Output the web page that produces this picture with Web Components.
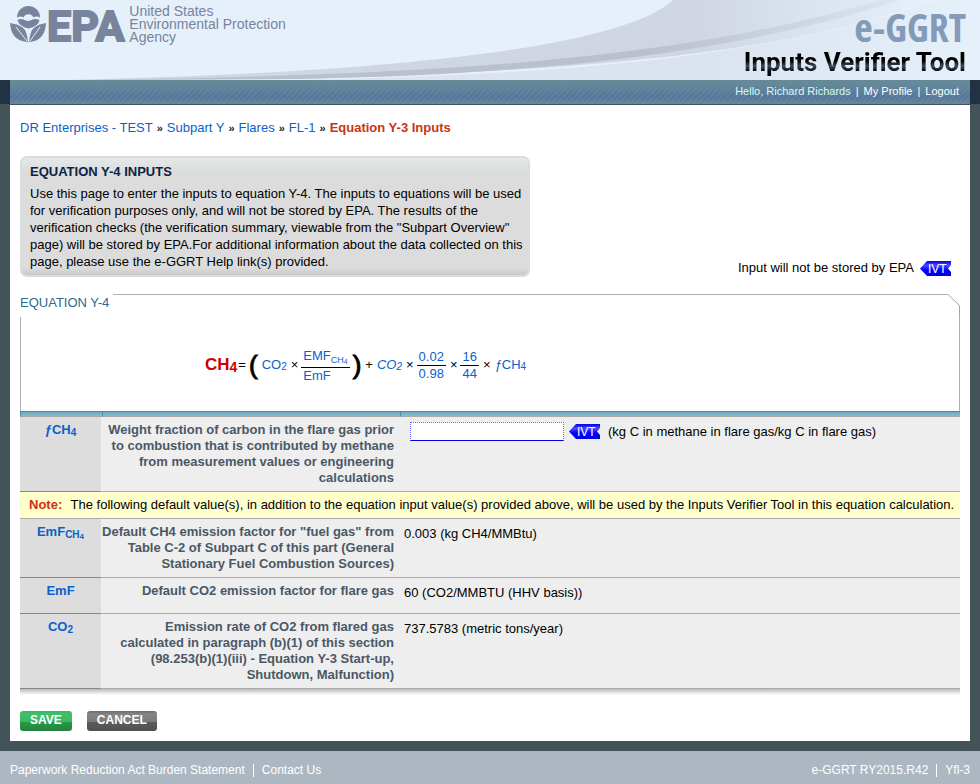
<!DOCTYPE html>
<html lang="en">
<head>
<meta charset="utf-8">
<title>e-GGRT Inputs Verifier Tool</title>
<style>
    body {
        margin: 0;
        background: #44525a;
        color: #000;
        font: 13px/16px "Liberation Sans", Arial, sans-serif;
    }
    main {
        display: block;
        margin: 0 10px 10px;
        padding: 14px 10px 10px;
        background: #fff;
    }
    .intro {
        display: flex;
        justify-content: space-between;
        align-items: flex-end;
        margin: 19px 0 17px;
    }
    .actions {
        display: flex;
        gap: 15px;
        margin-top: 16px;
    }
</style>
</head>
<body>
    <site-header></site-header>
    <user-bar user="Richard Richards"></user-bar>
    <main>
        <bread-crumbs>
            <a href="#">DR Enterprises - TEST</a>
            <a href="#">Subpart Y</a>
            <a href="#">Flares</a>
            <a href="#">FL-1</a>
            <b>Equation Y-3 Inputs</b>
        </bread-crumbs>
        <div class="intro">
            <info-box>
                <span slot="title">EQUATION Y-4 INPUTS</span>
                Use this page to enter the inputs to equation Y-4. The inputs to equations will be used for verification purposes only, and will not be stored by EPA. The results of the verification checks (the verification summary, viewable from the "Subpart Overview" page) will be stored by EPA.For additional information about the data collected on this page, please use the e-GGRT Help link(s) provided.
            </info-box>
            <ivt-legend>Input will not be stored by EPA</ivt-legend>
        </div>
        <equation-frame>
            <span slot="legend">EQUATION Y-4</span>
            <equation-formula></equation-formula>
        </equation-frame>
        <inputs-table></inputs-table>
        <div class="actions">
            <action-button kind="save">SAVE</action-button>
            <action-button kind="cancel">CANCEL</action-button>
        </div>
    </main>
    <site-footer></site-footer>

<script>
(function() {
    'use strict';

    // Base class: puts the markup of each element in its open shadow root
    class BaseElement extends HTMLElement {
        constructor() {
            super();
            this.attachShadow({ mode: 'open' });
        }

        connectedCallback() {
            this.shadowRoot.innerHTML = this.template();
        }
    }

    class SiteHeader extends BaseElement {
        template() {
            return `
                <style>
                    :host { display: grid; height: 80px; background: #e5f0fb; }
                    .swoosh, .content { grid-area: 1 / 1; }
                    .swoosh { width: 100%; height: 80px; }
                    .content { z-index: 1; display: flex; justify-content: space-between; padding: 0 14px 0 10px; }
                    .logo { display: flex; color: #77849c; }
                    .flower { width: 37px; height: 37px; margin-top: 5px; }
                    .epa { font: bold 43px/52px Roboto, "Liberation Sans", sans-serif; -webkit-text-stroke: 2px #77849c; }
                    .agency { font-size: 14px; line-height: 13px; margin: 5px 0 0 5px; }
                    .brand { display: flex; flex-direction: column; align-items: flex-end; }
                    .ggrt { font: bold 40px/54px "Open Sans Condensed", "Liberation Sans", sans-serif; color: #839bb8; }
                    .tool {
                        margin-top: -7px; font: bold 26px/30px Roboto, sans-serif;
                        color: transparent; background: linear-gradient(#000 14px, #3a4c5c 19px, #05080c 24px); background-clip: text; -webkit-background-clip: text;
                    }
                </style>
                <svg class="swoosh" viewBox="0 0 980 80" preserveAspectRatio="none" aria-hidden="true">
                    <defs>
                        <linearGradient id="low"><stop offset="0" stop-color="#dbe4ee"/><stop offset=".6" stop-color="#dbe4ee"/><stop offset="1" stop-color="#e5f0fb"/></linearGradient>
                        <linearGradient id="mid"><stop offset="0" stop-color="#cfd6e1"/><stop offset=".72" stop-color="#cfd6e1"/><stop offset="1" stop-color="#e5f0fb"/></linearGradient>
                        <linearGradient id="band"><stop offset="0" stop-color="#b8c0cb"/><stop offset=".7" stop-color="#bac1cd"/><stop offset="1" stop-color="#dce4ef"/></linearGradient>
                    </defs>
                    <path d="M300 80C560 74 760 60 940 0H980V80Z" fill="url(#low)"/>
                    <path d="M70 80C370 73 620 50 673 0H930C780 58 560 70 300 79Z" fill="url(#mid)"/>
                    <path d="M70 80C480 76 700 54 880 0H900C730 56 520 75 300 79Z" fill="url(#band)"/>
                </svg>
                <div class="content">
                    <div class="logo">
                        <svg class="flower" viewBox="0 0 37 37" fill="currentColor" aria-hidden="true">
                            <path d="M7 12.500A11.500 11.500 0 0 1 30 12.500Q26 10.500 23.500 12.500A5.500 5.500 0 0 0 13.500 12.500Q11 10.500 7 12.500Z"/>
                            <path d="M7.500 15Q11 13 14.500 15T21.500 15T29.500 15Q28.500 21.500 18.500 23.500Q9 21.500 7.500 15Z"/>
                            <path d="M0 18Q12 20 15 25Q17 29 18 37Q1 36 0 18Z"/>
                            <path d="M36 18Q25 20 22 25Q20 29 19 37Q35 36 36 18Z"/>
                            <path d="M6 22L17 36M30 22L20 36" stroke="#e5f0fb" stroke-width="1" fill="none"/>
                        </svg>
                        <span class="epa">EPA</span>
                        <span class="agency">United States<br>Environmental Protection<br>Agency</span>
                    </div>
                    <div class="brand">
                        <span class="ggrt">e-GGRT</span>
                        <span class="tool">Inputs Verifier Tool</span>
                    </div>
                </div>
            `;
        }
    }

    class UserBar extends BaseElement {
        template() {
            return `
                <style>
                    :host { display: block; padding: 0 10px; background: linear-gradient(#223243 24px, #44525a 24px); }
                    nav {
                        display: flex; justify-content: flex-end; gap: 5px;
                        padding: 3px 11px 4px; line-height: 17px;
                        font-size: 11px; color: #fff;
                        border-bottom: 1px solid #3f5260;
                        background:
                            linear-gradient(#668998 4px, #66899800 16px, #66899800 18px, #668998),
                            repeating-linear-gradient(135deg, #5674a0 0 2px, #5f8099 2px 4px);
                    }
                    .hello { color: #d5fbf0; }
                    a { color: inherit; text-decoration: none; }
                </style>
                <nav>
                    <span class="hello">Hello, ${this.getAttribute('user')}</span>
                    <span>|</span>
                    <a href="#">My Profile</a>
                    <span>|</span>
                    <a href="#">Logout</a>
                </nav>
            `;
        }
    }

    class BreadCrumbs extends BaseElement {
        template() {
            return `
                <style>
                    :host { display: block; }
                    nav { display: flex; line-height: 17px; }
                    ::slotted(a) { color: #0a62c8; text-decoration: none; }
                    ::slotted(a)::after { content: "»"; color: #222; font-weight: bold; font-size: 11px; margin: 0 4px; }
                    ::slotted(b) { color: #cc3311; }
                </style>
                <nav><slot></slot></nav>
            `;
        }
    }

    class InfoBox extends BaseElement {
        template() {
            return `
                <style>
                    :host {
                        display: block; box-sizing: border-box; width: 510px;
                        padding: 5px 2px 5px 8px; line-height: 17px;
                        border: 2px solid #d9dcdc; border-radius: 7px;
                        background: linear-gradient(#e2e9e9, #dcdcdc 14px, #dcdcdc calc(100% - 7px), #c8c8c8);
                    }
                    h2 { margin: 0 0 5px; font-size: 13px; line-height: 17px; color: #0c2340; }
                </style>
                <h2><slot name="title"></slot></h2>
                <slot></slot>
            `;
        }
    }

    // Blue arrow tag that marks the inputs EPA does not store
    class IvtBadge extends BaseElement {
        template() {
            return `
                <style>
                    :host { display: inline-block; width: 31px; height: 15px; }
                    svg { display: block; }
                    text { font: 12px "Liberation Sans", Arial, sans-serif; fill: #fff; }
                </style>
                <svg width="31" height="15" viewBox="0 0 31 15">
                    <defs><linearGradient id="g" x2="0" y2="1"><stop offset="0" stop-color="#0000e8"/><stop offset=".3" stop-color="#4a4aff"/><stop offset=".6" stop-color="#0000ff"/><stop offset="1" stop-color="#0000e0"/></linearGradient></defs>
                    <path d="M0 7.500L7 0H31V4L28 7.500L31 11V15H7Z" fill="url(#g)"/>
                    <text x="8" y="12">IVT</text>
                </svg>
            `;
        }
    }

    class IvtLegend extends BaseElement {
        template() {
            return `
                <style>
                    :host { display: flex; align-items: center; gap: 6px; padding: 0 9px 1px 0; }
                </style>
                <slot></slot><ivt-badge></ivt-badge>
            `;
        }
    }

    class EquationFrame extends BaseElement {
        template() {
            return `
                <style>
                    :host { display: block; }
                    .top { display: flex; height: 23px; }
                    .legend { padding-right: 4px; line-height: 18px; color: #2a6a8c; }
                    .line { flex: 1; border-top: 1px solid #a9b0b8; }
                    .body { border: solid #a9b0b8; border-width: 0 1px; padding: 24px 0 22px; }
                </style>
                <div class="top">
                    <span class="legend"><slot name="legend"></slot></span>
                    <span class="line"></span>
                    <svg width="12" height="23" fill="none" stroke="#a0a6ad" aria-hidden="true"><path d="M0 .5L11.500 11.500V23"/></svg>
                </div>
                <div class="body"><slot></slot></div>
            `;
        }
    }

    class EquationFormula extends BaseElement {
        template() {
            return `
                <style>
                    :host { display: flex; align-items: center; gap: 3px; height: 48px; padding-left: 184px; }
                    .var, .frac { color: #0a62c8; }
                    sub { font-size: 10px; line-height: 1; vertical-align: -1px; }
                    .result { color: #c00; font-weight: bold; font-size: 17px; }
                    .result sub { font-size: 14px; vertical-align: -2px; }
                    .paren { font-size: 26px; line-height: 30px; -webkit-text-stroke: 1px #000; }
                    .frac { display: grid; text-align: center; line-height: 17px; }
                    .frac span + span { border-top: 1px solid #000; line-height: 16px; }
                    .frac span { padding: 0 2px; }
                    .left { text-align: left; }
                    .left span:first-child { padding-bottom: 1px; line-height: 20px; }
                    .left sub { font-size: 9px; vertical-align: -3px; }
                    .left sub sub { font-size: 7px; vertical-align: -1px; }
                    .equals { margin-left: -2px; }
                    .var { margin-left: 1px; }
                    .op { margin-left: 1px; }
                </style>
                <span class="result">CH<sub>4</sub></span>
                <span class="equals">=</span>
                <span class="paren">(</span>
                <span class="var">CO<sub>2</sub></span>
                <span class="op">×</span>
                <span class="frac left"><span>EMF<sub>CH<sub>4</sub></sub></span><span>EmF</span></span>
                <span class="paren">)</span>
                <span class="op">+</span>
                <i class="var">CO<sub>2</sub></i>
                <span class="op">×</span>
                <span class="frac"><span>0.02</span><span>0.98</span></span>
                <span class="op">×</span>
                <span class="frac"><span>16</span><span>44</span></span>
                <span class="op">×</span>
                <span class="var"><i>ƒ</i>CH<sub>4</sub></span>
            `;
        }
    }

    class InputsTable extends BaseElement {
        template() {
            return `
                <style>
                    :host { display: block; }
                    table { width: 100%; border-collapse: separate; border-spacing: 0; table-layout: fixed; }
                    .code { width: 82px; }
                    .desc { width: 298px; }
                    thead td {
                        height: 4px; padding: 0;
                        border-top: 1px solid #3f8fae; border-bottom: 1px solid #aaa; border-left: 1px solid #3f8fae;
                        background: linear-gradient(#6faac2, #8dbacb);
                    }
                    tbody th, tbody td { vertical-align: top; border-bottom: 1px solid #aaa; background: #eee; }
                    th.code { box-sizing: border-box; padding: 5px 0; background: #ddd; border-right: 1px solid #eee; border-bottom-color: #888; color: #0a62c8; }
                    th.desc { box-sizing: border-box; padding: 5px 6px 5px 0; text-align: right; color: #4a5866; }
                    td { padding: 7px 4px 6px; }
                    tr.short { height: 36px; }
                    tr.note td { padding: 5px 2px 5px 9px; background: #ffc; }
                    tr.note b { color: #cc3311; margin-right: 5px; }
                    sub { font-size: 10px; line-height: 1; vertical-align: -2px; }
                    sub sub { font-size: 8px; vertical-align: -1px; }
                    td.entry { padding: 5px 10px; }
                    .entry div { display: flex; align-items: center; gap: 5px; }
                    .entry span { margin-left: 3px; }
                    input {
                        box-sizing: border-box; width: 154px; height: 19px; padding: 1px 2px;
                        font: inherit; background: #fff; border: 1px dotted #6a6aff; border-bottom: 1px solid #0000e0;
                    }
                    .shade { height: 6px; background: linear-gradient(#bbb, #fff); }
                </style>
                <table>
                    <colgroup><col class="code"><col class="desc"><col></colgroup>
                    <thead><tr><td></td><td></td><td></td></tr></thead>
                    <tbody>
                        <tr>
                            <th class="code">ƒCH<sub>4</sub></th>
                            <th class="desc"><label for="fch4">Weight fraction of carbon in the flare gas prior to combustion that is contributed by methane from measurement values or engineering calculations</label></th>
                            <td class="entry"><div><input id="fch4" type="text"><ivt-badge></ivt-badge><span>(kg C in methane in flare gas/kg C in flare gas)</span></div></td>
                        </tr>
                        <tr class="note">
                            <td colspan="3"><b>Note:</b> The following default value(s), in addition to the equation input value(s) provided above, will be used by the Inputs Verifier Tool in this equation calculation.</td>
                        </tr>
                        <tr>
                            <th class="code">EmF<sub>CH<sub>4</sub></sub></th>
                            <th class="desc">Default CH4 emission factor for "fuel gas" from Table C-2 of Subpart C of this part (General Stationary Fuel Combustion Sources)</th>
                            <td>0.003 (kg CH4/MMBtu)</td>
                        </tr>
                        <tr class="short">
                            <th class="code">EmF</th>
                            <th class="desc">Default CO2 emission factor for flare gas</th>
                            <td>60 (CO2/MMBTU (HHV basis))</td>
                        </tr>
                        <tr>
                            <th class="code">CO<sub>2</sub></th>
                            <th class="desc">Emission rate of CO2 from flared gas calculated in paragraph (b)(1) of this section (98.253(b)(1)(iii) - Equation Y-3 Start-up, Shutdown, Malfunction)</th>
                            <td>737.5783 (metric tons/year)</td>
                        </tr>
                    </tbody>
                </table>
                <div class="shade"></div>
            `;
        }
    }

    class ActionButton extends BaseElement {
        template() {
            const save = this.getAttribute('kind') === 'save';
            const fill = save
                ? 'linear-gradient(#45b062, #3fc168 3px, #3ab75f 11px, #2a9a48 11px, #25803d)'
                : 'linear-gradient(#6b6b6b, #858585 3px, #7b7b7b 11px, #5c5c5c 11px, #505050)';
            return `
                <style>
                    :host { display: block; }
                    button {
                        display: block; height: 20px; padding: 0 10px 2px;
                        border: 0; border-radius: 3px; background: ${fill};
                        color: #fff; font: bold 12px/18px "Liberation Sans", Arial, sans-serif;
                    }
                </style>
                <button type="button"><slot></slot></button>
            `;
        }
    }

    class SiteFooter extends BaseElement {
        template() {
            return `
                <style>
                    :host { display: flex; justify-content: space-between; padding: 11px 10px 6px; background: #adb7c2; color: #fff; font-size: 12px; }
                    div { display: flex; align-items: center; gap: 8px; }
                    a { color: inherit; text-decoration: none; }
                    i { width: 1px; height: 13px; background: #fff; }
                </style>
                <div><a href="#">Paperwork Reduction Act Burden Statement</a><i></i><a href="#">Contact Us</a></div>
                <div><span>e-GGRT RY2015.R42</span><i></i><span>Yfl-3</span></div>
            `;
        }
    }

    customElements.define('site-header', SiteHeader);
    customElements.define('user-bar', UserBar);
    customElements.define('bread-crumbs', BreadCrumbs);
    customElements.define('info-box', InfoBox);
    customElements.define('ivt-badge', IvtBadge);
    customElements.define('ivt-legend', IvtLegend);
    customElements.define('equation-frame', EquationFrame);
    customElements.define('equation-formula', EquationFormula);
    customElements.define('inputs-table', InputsTable);
    customElements.define('action-button', ActionButton);
    customElements.define('site-footer', SiteFooter);
})();
</script>
</body>
</html>
